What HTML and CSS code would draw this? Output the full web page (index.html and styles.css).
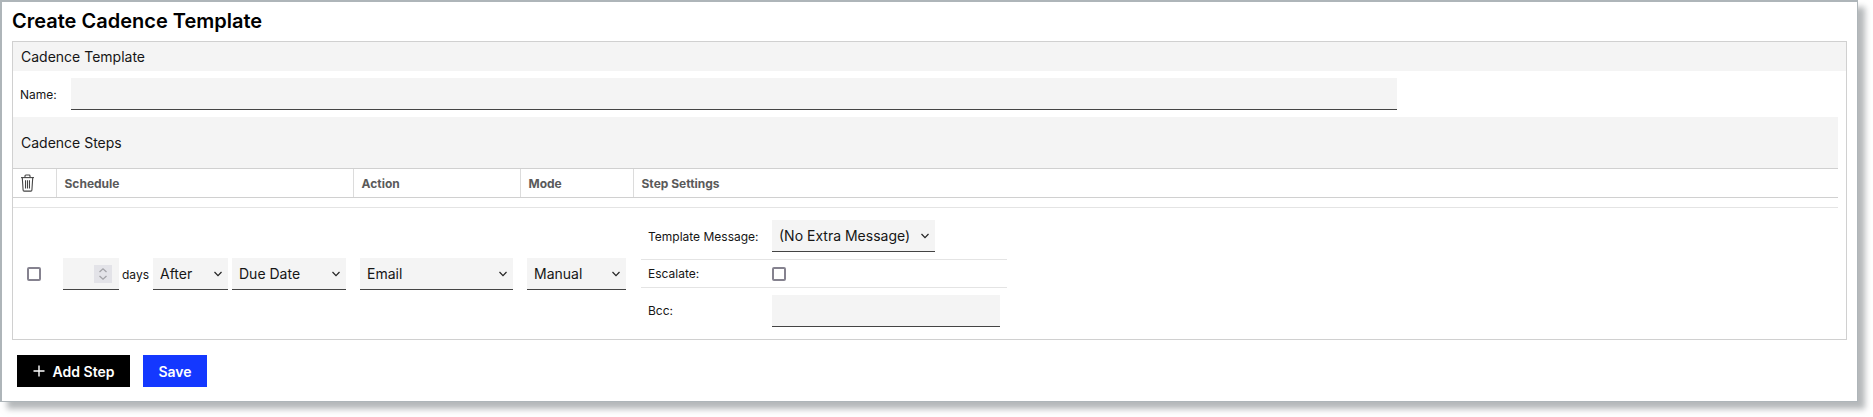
FILE: index.html
```html
<!DOCTYPE html>
<html lang="en">
<head>
  <meta charset="UTF-8" />
  <title>Create Cadence Template</title>
  <link rel="stylesheet" href="styles.css">
</head>
<body>
  <main class="window">
    <h1 class="page-title">Create Cadence Template</h1>

    <section class="panel">
      <h2 class="panel-head">Cadence Template</h2>

      <div class="name-row">
        <label class="name-label" for="name">Name:</label>
        <input class="field name-input" id="name" type="text">
      </div>

      <h2 class="steps-band">Cadence Steps</h2>

      <table class="steps">
        <thead>
          <tr class="steps-head">
            <th class="col-check">
              <svg class="trash" viewBox="0 0 16 20" width="15" height="18" fill="none" stroke="#444" stroke-width="1.2">
                <path d="M.8 4h14.4" />
                <path d="M5.2 4V2.2a1 1 0 0 1 1-1h3.6a1 1 0 0 1 1 1V4" />
                <path d="M2.2 4l.9 13.8a1.2 1.2 0 0 0 1.2 1.2h7.4a1.2 1.2 0 0 0 1.2-1.2L13.8 4" />
                <path d="M5.8 7v9M8 7v9M10.2 7v9" />
              </svg>
            </th>
            <th class="col-schedule">Schedule</th>
            <th class="col-action">Action</th>
            <th class="col-mode">Mode</th>
            <th>Step Settings</th>
          </tr>
          <tr class="steps-gap"><td colspan="5"></td></tr>
        </thead>
        <tbody>
          <tr class="step">
            <td class="cell-check"><input class="check" type="checkbox"></td>
            <td>
              <div class="schedule">
                <div class="field number-field">
                  <input class="number-input" type="text">
                  <span class="spinner">
                    <svg viewBox="0 0 10 14" width="10" height="14" fill="none" stroke="#a3a3a8" stroke-width="1.3">
                      <path d="M1.5 5 5 1.8 8.5 5" />
                      <path d="M1.5 9 5 12.2 8.5 9" />
                    </svg>
                  </span>
                </div>
                <span class="days">days</span>
                <select class="field select-after"><option>After</option></select>
                <select class="field select-due"><option>Due Date</option></select>
              </div>
            </td>
            <td><select class="field select-action"><option>Email</option></select></td>
            <td><select class="field select-mode"><option>Manual</option></select></td>
            <td class="cell-settings">
              <table class="settings">
                <tr class="settings-tall">
                  <td class="settings-label">Template Message:</td>
                  <td><select class="field select-message"><option>(No Extra Message)</option></select></td>
                </tr>
                <tr class="settings-short">
                  <td class="settings-label">Escalate:</td>
                  <td class="cell-escalate"><input class="check" type="checkbox"></td>
                </tr>
                <tr class="settings-tall">
                  <td class="settings-label">Bcc:</td>
                  <td><input class="field bcc-input" type="text"></td>
                </tr>
              </table>
            </td>
          </tr>
        </tbody>
      </table>
    </section>

    <div class="actions">
      <button class="btn btn-black" type="button">
        <svg viewBox="0 0 12 12" width="12" height="12" fill="none" stroke="#fff" stroke-width="1.4">
          <path d="M6 .5v11M.5 6h11" />
        </svg>
        Add Step
      </button>
      <button class="btn btn-blue" type="button">Save</button>
    </div>
  </main>
</body>
</html>
```

FILE: styles.css
```css
body {
  margin: 0;
  min-height: 417px;
  background: white;
  color: #161616;
  font-family: Inter, "Liberation Sans", sans-serif;
  font-size: 12px;
}

.window {
  box-sizing: border-box;
  width: 1858px;
  height: 402px;
  border: 2px solid #aeb5b9;
  border-right-width: 1px;
  border-bottom-width: 1px;
  background: white;
  box-shadow: 7px 7px 6px rgba(120, 125, 130, 0.55);
}

.page-title {
  height: 39px;
  margin: 0;
  padding: 7px 0 0 10px;
  box-sizing: border-box;
  font-size: 20px;
  line-height: 24px;
  font-weight: 600;
  color: black;
}

.panel {
  box-sizing: border-box;
  width: 1835px;
  height: 299px;
  margin-left: 10px;
  border: 1px solid #d0d0d0;
}

.panel-head {
  height: 29px;
  margin: 0;
  padding-left: 8px;
  background: #f4f4f4;
  font-size: 14px;
  line-height: 29px;
  font-weight: 400;
}

.name-row {
  display: flex;
  align-items: center;
  margin: 7px 0;
  padding-left: 7px;
}

.name-label {
  width: 51px;
}

.field {
  box-sizing: border-box;
  height: 32px;
  border: none;
  border-bottom: 1px solid #444;
  border-radius: 0;
  background: #f4f4f4;
  color: #161616;
  font-family: Inter, "Liberation Sans", sans-serif;
  font-size: 14px;
  outline: none;
}

select.field {
  padding: 0 0 0 7px;
  appearance: none;
  background-image: url("data:image/svg+xml,%3Csvg xmlns='http://www.w3.org/2000/svg' width='8' height='6' fill='none' stroke='%23222' stroke-width='1.2'%3E%3Cpath d='M.5 1 4 4.6 7.5 1'/%3E%3C/svg%3E");
  background-repeat: no-repeat;
  background-position: right 6px center;
}

.name-input {
  width: 1326px;
}

.steps-band {
  box-sizing: border-box;
  width: 1825px;
  height: 51px;
  margin: 0;
  padding-left: 8px;
  background: #f4f4f4;
  font-size: 14px;
  line-height: 51px;
  font-weight: 400;
}

.steps {
  width: 1825px;
  table-layout: fixed;
  border-collapse: collapse;
}

.steps td,
.steps th {
  box-sizing: border-box;
  padding: 0;
}

.steps .steps-head th {
  height: 29px;
  padding-left: 8px;
  border-top: 1px solid #d0d0d0;
  border-bottom: 1px solid #d0d0d0;
  border-left: 1px solid #dcdcdc;
  color: #5a5a5a;
  font-size: 12px;
  font-weight: 700;
  text-align: left;
}

.steps .steps-head .col-check {
  padding-left: 7px;
  border-left: none;
}

.trash {
  display: block;
}

.col-check { width: 43px; }
.col-schedule { width: 297px; }
.col-action { width: 167px; }
.col-mode { width: 113px; }

.steps-gap td {
  height: 10px;
  border-bottom: 1px solid #e4e4e4;
}

.steps .step > td {
  height: 131px;
  padding: 2px 0 0 7px;
}

.steps .step > .cell-check {
  padding-left: 14px;
}

.steps .step > .cell-settings {
  padding: 0 0 0 8px;
}

.check {
  display: block;
  box-sizing: border-box;
  width: 14px;
  height: 14px;
  margin: 0;
  border: 2px solid #85828f;
  border-radius: 2px;
  background: white;
  appearance: none;
}

.schedule {
  display: flex;
  align-items: center;
}

.number-field {
  display: flex;
  align-items: center;
  width: 56px;
  padding-left: 4px;
}

.number-input {
  box-sizing: border-box;
  width: 27px;
  padding: 0;
  border: none;
  background: transparent;
  outline: none;
}

.spinner {
  display: flex;
  align-items: center;
  justify-content: center;
  width: 18px;
  height: 18px;
  background: #e3e3e8;
}

.days {
  width: 27px;
  margin: 0 4px 0 3px;
}

.select-after { width: 75px; margin-right: 4px; }
.select-due { width: 114px; }
.select-action { width: 153px; display: block; }
.select-mode { width: 99px; display: block; }
.select-message { width: 163px; display: block; }

.settings {
  width: 366px;
  table-layout: fixed;
  border-collapse: collapse;
}

.settings td {
  box-sizing: border-box;
  padding: 0;
  border-bottom: 1px solid #e4e4e4;
}

.settings tr:last-child td {
  border-bottom: none;
}

.settings-tall td {
  height: 46px;
}

.settings-short td {
  height: 28px;
}

.settings .settings-label {
  width: 131px;
  padding-left: 7px;
}

.settings .cell-escalate {
  padding-top: 2px;
}

.bcc-input {
  display: block;
  width: 228px;
}

.actions {
  display: flex;
  gap: 13px;
  margin: 15px 0 0 15px;
}

.btn {
  display: flex;
  align-items: center;
  justify-content: center;
  gap: 8px;
  height: 32px;
  padding: 0;
  border: none;
  color: white;
  font-family: Inter, "Liberation Sans", sans-serif;
  font-size: 14px;
  font-weight: 600;
}

.btn-black {
  width: 113px;
  background: black;
}

.btn-blue {
  width: 64px;
  background: #1438ff;
}
```
